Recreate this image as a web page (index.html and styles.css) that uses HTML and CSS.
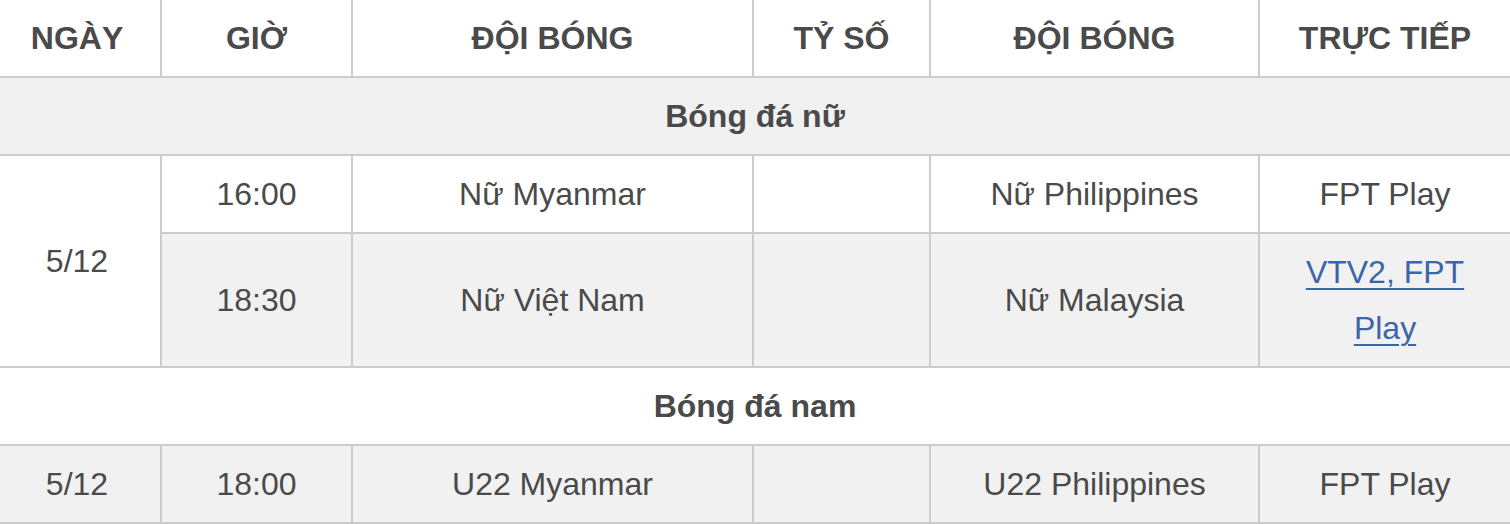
FILE: index.html
```html
<!DOCTYPE html>
<html lang="vi">
<head>
<meta charset="utf-8">
<title>Lịch thi đấu</title>
<link rel="stylesheet" href="styles.css">
</head>
<body>
<table class="schedule">
  <colgroup>
    <col class="c-date">
    <col class="c-time">
    <col class="c-team">
    <col class="c-score">
    <col class="c-team2">
    <col class="c-live">
  </colgroup>
  <thead>
    <tr>
      <th class="date">NGÀY</th>
      <th>GIỜ</th>
      <th>ĐỘI BÓNG</th>
      <th>TỶ SỐ</th>
      <th>ĐỘI BÓNG</th>
      <th>TRỰC TIẾP</th>
    </tr>
  </thead>
  <tbody>
    <tr class="group gray">
      <td colspan="6">Bóng đá nữ</td>
    </tr>
    <tr>
      <td class="date" rowspan="2">5/12</td>
      <td>16:00</td>
      <td>Nữ Myanmar</td>
      <td></td>
      <td>Nữ Philippines</td>
      <td>FPT Play</td>
    </tr>
    <tr class="gray">
      <td>18:30</td>
      <td>Nữ Việt Nam</td>
      <td></td>
      <td>Nữ Malaysia</td>
      <td><a href="#" class="live-link">VTV2, FPT Play</a></td>
    </tr>
    <tr class="group">
      <td colspan="6">Bóng đá nam</td>
    </tr>
    <tr class="gray">
      <td class="date">5/12</td>
      <td>18:00</td>
      <td>U22 Myanmar</td>
      <td></td>
      <td>U22 Philippines</td>
      <td>FPT Play</td>
    </tr>
  </tbody>
</table>
</body>
</html>
```

FILE: styles.css
```css
html, body {
  margin: 0;
  padding: 0;
  background: #ffffff;
}

.schedule {
  width: 1510px;
  table-layout: fixed;
  border-collapse: collapse;
  font-family: "Liberation Sans", Arial, Helvetica, sans-serif;
  font-size: 32px;
  line-height: 56px;
  color: #4a4a4a;
}

.c-date { width: 161px; }
.c-time { width: 191px; }
.c-team { width: 401px; }
.c-score { width: 177px; }
.c-team2 { width: 329px; }
.c-live { width: 251px; }

.schedule th,
.schedule td {
  border: 2px solid #cccccc;
  padding: 10px 12px;
  text-align: center;
  vertical-align: middle;
}

.schedule .date {
  padding-left: 6px;
  padding-right: 12px;
}

.schedule th {
  font-weight: bold;
  border-top: none;
  background: #ffffff;
}

.schedule tr > :first-child {
  border-left: none;
}

.schedule tr > :last-child {
  border-right: none;
}

.schedule td[rowspan] {
  border-left: none;
  background: #ffffff;
}

.schedule tr.gray td {
  background: #f1f1f1;
}

.schedule tr.gray td[rowspan] {
  background: #ffffff;
}

.schedule tr.group td {
  font-weight: bold;
}

.live-link {
  color: #3b66a9;
  text-decoration: underline;
  text-decoration-thickness: 2px;
  text-underline-offset: 5px;
}
```
